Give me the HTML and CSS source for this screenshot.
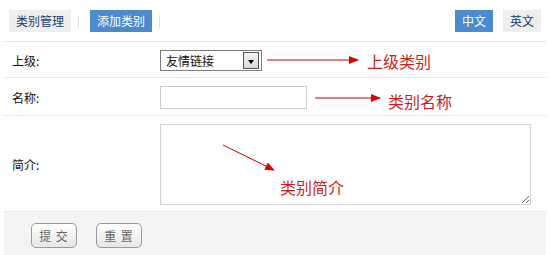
FILE: index.html
```html
<!DOCTYPE html>
<html lang="zh">
<head>
<meta charset="utf-8">
<title>添加类别</title>
<link rel="stylesheet" href="styles.css">
</head>
<body>
<div class="page">
  <div class="tabs">
    <div class="tab-group">
      <span class="tab">类别管理</span>
      <span class="sep"></span>
      <span class="tab active">添加类别</span>
      <span class="sep"></span>
    </div>
    <div class="tab-group lang">
      <span class="tab active">中文</span>
      <span class="tab">英文</span>
    </div>
  </div>

  <div class="row row-parent">
    <div class="label">上级:</div>
    <div class="field">
      <div class="select">
        <span class="select-text">友情链接</span>
        <span class="select-btn"><span class="tri"></span></span>
      </div>
    </div>
  </div>

  <div class="row row-name">
    <div class="label">名称:</div>
    <div class="field"><input class="text-input" type="text"></div>
  </div>

  <div class="row row-desc">
    <div class="label">简介:</div>
    <div class="field"><textarea class="textarea"></textarea></div>
  </div>

  <div class="footer">
    <button class="btn" type="button">提 交</button>
    <button class="btn" type="button">重 置</button>
  </div>

  <svg class="notes" width="550" height="255" viewBox="0 0 550 255">
    <defs>
      <marker id="ah" markerWidth="10" markerHeight="8" refX="9" refY="4" orient="auto" markerUnits="userSpaceOnUse">
        <path d="M0,0 L10,4 L0,8 Z" fill="#e00000"/>
      </marker>
    </defs>
    <line x1="267" y1="60" x2="358" y2="60" stroke="#d00000" stroke-width="1" marker-end="url(#ah)"/>
    <line x1="315" y1="98" x2="380" y2="98" stroke="#d00000" stroke-width="1" marker-end="url(#ah)"/>
    <line x1="223" y1="145" x2="274" y2="170" stroke="#d00000" stroke-width="1" marker-end="url(#ah)"/>
  </svg>
  <span class="note note-1">上级类别</span>
  <span class="note note-2">类别名称</span>
  <span class="note note-3">类别简介</span>
</div>
</body>
</html>
```

FILE: styles.css
```css
* { box-sizing: border-box; }
html, body {
  margin: 0;
  padding: 0;
  background: #fff;
}
body {
  font-family: "Noto Sans CJK SC", "Liberation Sans", sans-serif;
  font-size: 12px;
  color: #000;
}
.page {
  position: relative;
  width: 550px;
  height: 255px;
  padding: 0 4px;
  overflow: hidden;
}
.tabs {
  display: flex;
  justify-content: space-between;
  align-items: center;
  padding: 10px 5px 9px 5px;
  border-bottom: 1px solid #e6e6e6;
}
.tab-group {
  display: flex;
  align-items: center;
}
.tab {
  display: block;
  height: 22px;
  line-height: 22px;
  padding: 0 7px;
  background: #eeeeee;
  color: #173d73;
  font-size: 12px;
}
.tab.active {
  background: #4a8bd0;
  color: #fff;
}
.sep {
  display: block;
  width: 1px;
  height: 13px;
  background: #dcdcdc;
  margin: 0 11px 0 7px;
}
.lang .tab + .tab { margin-left: 10px; }

.row {
  display: flex;
  align-items: center;
  border-bottom: 1px solid #e8e8e8;
}
.row-parent { height: 36px; padding-top: 2px; }
.row-name { height: 38px; padding-top: 1px; }
.row-desc { height: 96px; padding-top: 2px; }
.label {
  width: 156px;
  padding-left: 8px;
  font-size: 12px;
  color: #111;
}
.field { display: flex; align-items: center; }

.select {
  display: flex;
  align-items: center;
  justify-content: space-between;
  width: 102px;
  height: 21px;
  border: 1px solid #7b7b7b;
  padding: 0 2px 0 5px;
  background: #fff;
}
.select-text { font-size: 12px; color: #111; }
.select-btn {
  display: flex;
  align-items: center;
  justify-content: center;
  width: 16px;
  height: 17px;
  border: 1px solid #555;
  background: linear-gradient(#f4f4f4, #d8d8d8);
}
.tri {
  width: 0;
  height: 0;
  border-left: 3.5px solid transparent;
  border-right: 3.5px solid transparent;
  border-top: 4px solid #000;
  margin-top: 2px;
}

.text-input {
  width: 147px;
  height: 23px;
  border: 1px solid #cccccc;
  margin: 0;
  padding: 0 3px;
  outline: none;
}
.textarea {
  display: block;
  width: 371px;
  height: 81px;
  border: 1px solid #d2d2d2;
  margin: 0;
  padding: 2px;
  resize: both;
  outline: none;
}

.footer {
  display: flex;
  gap: 19px;
  height: 44px;
  padding: 11px 0 0 27px;
  background: #f4f4f4;
}
.btn {
  width: 46px;
  height: 25px;
  border: 1px solid #9a9a9a;
  border-radius: 5px;
  background: linear-gradient(#ffffff, #e6e6e6);
  color: #666;
  font-family: "Noto Sans CJK SC", sans-serif;
  font-size: 12px;
  padding: 0;
  letter-spacing: 1px;
}

.notes {
  position: absolute;
  left: 0;
  top: 0;
  pointer-events: none;
}
.note {
  position: absolute;
  font-size: 16px;
  line-height: 20px;
  color: #c81e1e;
  white-space: nowrap;
}
.note-1 { left: 367px; top: 51px; }
.note-2 { left: 388px; top: 91px; }
.note-3 { left: 280px; top: 177px; }
```
